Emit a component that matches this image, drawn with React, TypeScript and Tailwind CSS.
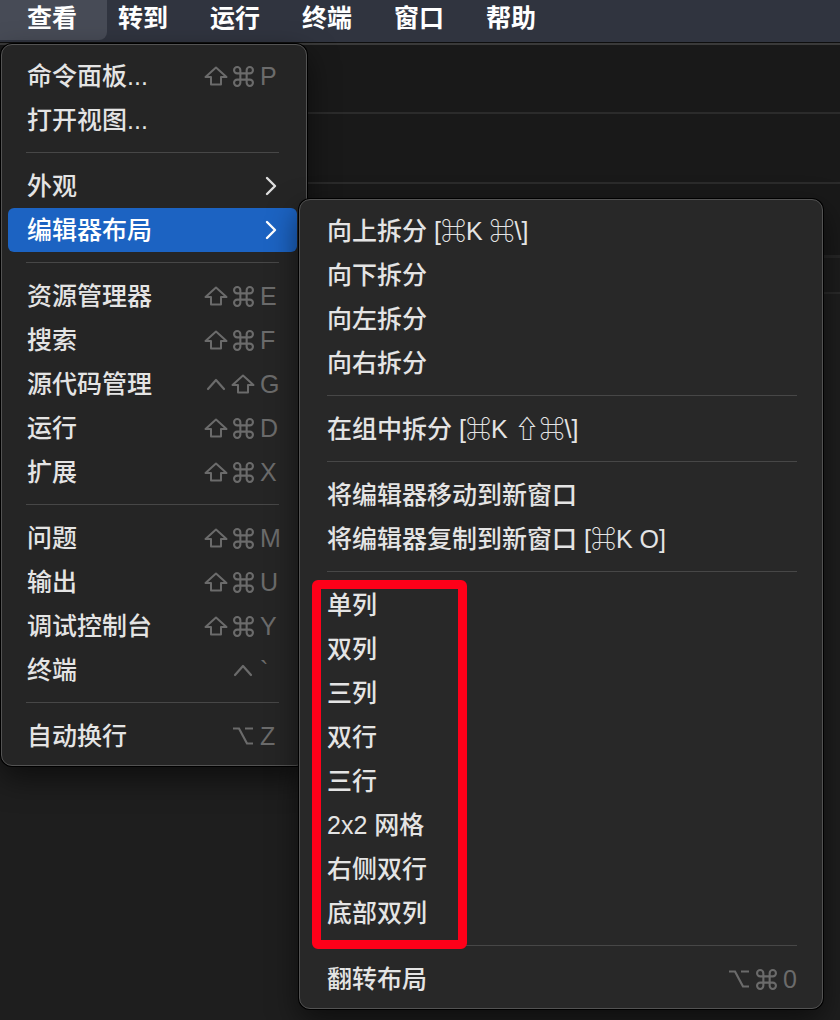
import React from 'react'

type Item =
  | 'sep'
  | {
      label: string
      keys?: string[]
      sub?: boolean
      active?: boolean
    }

const menuBar = ['查看', '转到', '运行', '终端', '窗口', '帮助']

const viewMenu: Item[] = [
  { label: '命令面板...', keys: ['shift', 'cmd', 'P'] },
  { label: '打开视图...' },
  'sep',
  { label: '外观', sub: true },
  { label: '编辑器布局', sub: true, active: true },
  'sep',
  { label: '资源管理器', keys: ['shift', 'cmd', 'E'] },
  { label: '搜索', keys: ['shift', 'cmd', 'F'] },
  { label: '源代码管理', keys: ['ctrl', 'shift', 'G'] },
  { label: '运行', keys: ['shift', 'cmd', 'D'] },
  { label: '扩展', keys: ['shift', 'cmd', 'X'] },
  'sep',
  { label: '问题', keys: ['shift', 'cmd', 'M'] },
  { label: '输出', keys: ['shift', 'cmd', 'U'] },
  { label: '调试控制台', keys: ['shift', 'cmd', 'Y'] },
  { label: '终端', keys: ['', 'ctrl', '`'] },
  'sep',
  { label: '自动换行', keys: ['', 'opt', 'Z'] },
]

const layoutMenu: Item[] = [
  { label: '向上拆分 [⌘K ⌘\\]' },
  { label: '向下拆分' },
  { label: '向左拆分' },
  { label: '向右拆分' },
  'sep',
  { label: '在组中拆分 [⌘K ⇧⌘\\]' },
  'sep',
  { label: '将编辑器移动到新窗口' },
  { label: '将编辑器复制到新窗口 [⌘K O]' },
  'sep',
  { label: '单列' },
  { label: '双列' },
  { label: '三列' },
  { label: '双行' },
  { label: '三行' },
  { label: '2x2 网格' },
  { label: '右侧双行' },
  { label: '底部双列' },
  'sep',
  { label: '翻转布局', keys: ['opt', 'cmd', '0'] },
]

const FONT = { fontFamily: '"Liberation Sans", "Noto Sans CJK SC", "DejaVu Sans", sans-serif' }

// 快捷键符号，用 svg 画
const KeyGlyph = ({ k }: { k: string }) => {
  if (k === 'shift')
    return (
      <svg width="24" height="20" viewBox="0 0 24 20" fill="none" stroke="currentColor" strokeWidth="2" strokeLinejoin="round">
        <path d="M12 1.5 22.5 11H17v7.5H7V11H1.5Z" />
      </svg>
    )
  if (k === 'cmd')
    return (
      <svg width="21" height="21" viewBox="2 2 20 20" fill="none" stroke="currentColor" strokeWidth="2">
        <path d="M15 6v12a3 3 0 1 0 3-3H6a3 3 0 1 0 3 3V6a3 3 0 1 0-3 3h12a3 3 0 1 0-3-3" />
      </svg>
    )
  if (k === 'ctrl')
    return (
      <svg width="20" height="14" viewBox="0 0 20 14" fill="none" stroke="currentColor" strokeWidth="2.2" strokeLinecap="round" strokeLinejoin="round">
        <polyline points="2,12 10,3 18,12" />
      </svg>
    )
  if (k === 'opt')
    return (
      <svg width="22" height="20" viewBox="0 0 22 20" fill="none" stroke="currentColor" strokeWidth="2.2">
        <path d="M1 2.5h6l8 15h6M13 2.5h8" />
      </svg>
    )
  if (!k) return null
  return <span className="text-[25px] leading-none">{k}</span>
}

const Shortcut = ({ keys }: { keys: string[] }) => (
  <span className="flex items-center text-[#6b6b6b]">
    <span className="flex w-[24px] justify-center">
      <KeyGlyph k={keys[0]} />
    </span>
    <span className="flex w-[30px] justify-center">
      <KeyGlyph k={keys[1]} />
    </span>
    <span className="flex w-[24px] pl-[2px]">
      <KeyGlyph k={keys[2]} />
    </span>
  </span>
)

const Chevron = () => (
  <svg width="12" height="20" viewBox="0 0 12 20" fill="none" stroke="currentColor" strokeWidth="2.4" strokeLinecap="round" strokeLinejoin="round">
    <polyline points="2,2 10,10 2,18" />
  </svg>
)

const MenuList = ({ items, shortcutPad }: { items: Item[]; shortcutPad: string }) => (
  <>
    {items.map((item, i) => {
      if (item === 'sep') {
        return (
          <div key={i} className="pt-[10px] pb-[11px] px-[18px]">
            <div className="h-px bg-[#474747]" />
          </div>
        )
      }
      return (
        <div
          key={i}
          className={`flex h-[44px] items-center justify-between rounded-[6px] pl-[19px] ${
            item.keys ? shortcutPad : 'pr-[20px]'
          } ${item.active ? 'bg-[#1c63c2] text-white' : 'text-[#e4e4e4]'}`}
        >
          <span className="text-[25px] font-medium leading-none whitespace-pre">{item.label}</span>
          {item.keys && <Shortcut keys={item.keys} />}
          {item.sub && (
            <span className={item.active ? 'text-white' : 'text-[#dedede]'}>
              <Chevron />
            </span>
          )}
        </div>
      )
    })}
  </>
)

export default function App() {
  return (
    <div className="relative h-[1020px] w-[840px] overflow-hidden bg-[#1e1e1e]" style={FONT}>
      {/* 菜单栏 */}
      <div className="flex h-[42px] items-start bg-[#30343f]">
        <div className="flex h-[40px] w-[107px] items-center rounded-br-[8px] bg-[#474b56] pl-[27px] pb-[3px]">
          <span className="text-[25px] font-semibold leading-none text-white">{menuBar[0]}</span>
        </div>
        <div className="ml-[11px] flex h-[40px] items-center gap-[42px] pb-[3px]">
          {menuBar.slice(1).map((m) => (
            <span key={m} className="text-[25px] font-semibold leading-none text-white">
              {m}
            </span>
          ))}
        </div>
      </div>
      <div className="h-px bg-[#0e0e0e]" />
      <div className="h-[2px] bg-[#3a3a3a]" />

      {/* 编辑器背景 */}
      <div className="h-[67px] bg-[#191919]" />
      <div className="h-[2px] bg-[#2b2b2b]" />
      <div className="h-[68px] bg-[#191919]" />
      <div className="h-[2px] bg-[#2b2b2b]" />
      <div className="h-[71px] bg-[#191919]" />
      <div className="h-[3px] bg-[#262626]" />
      <div className="h-[34px] bg-[#1c1c1c]" />
      <div className="h-[2px] bg-[#2a2a2a]" />

      {/* 查看 菜单 */}
      <div className="absolute left-[1px] top-[44px] w-[306px] rounded-[11px] border border-[#535353] bg-[#252525] pt-[9px] pb-[7px] pl-[6px] pr-[9px] shadow-[0_0_0_1px_#000,0_12px_30px_rgba(0,0,0,0.55)]">
        <MenuList items={viewMenu} shortcutPad="pr-[15px]" />
      </div>

      {/* 编辑器布局 子菜单 */}
      <div className="absolute left-[299px] top-[199px] w-[524px] rounded-[11px] border border-[#535353] bg-[#282828] pt-[9px] pb-[7px] pl-[7px] pr-[7px] shadow-[0_0_0_1px_#000,0_12px_30px_rgba(0,0,0,0.55)]">
        <div className="[&>div]:pl-[20px]">
          <MenuList items={layoutMenu} shortcutPad="pr-[10px]" />
        </div>
        {/* 红色标注框 */}
        <div className="absolute left-[12px] top-[380px] h-[369px] w-[155px] rounded-[6px] border-[9px] border-[#ff0019]" />
      </div>
    </div>
  )
}
